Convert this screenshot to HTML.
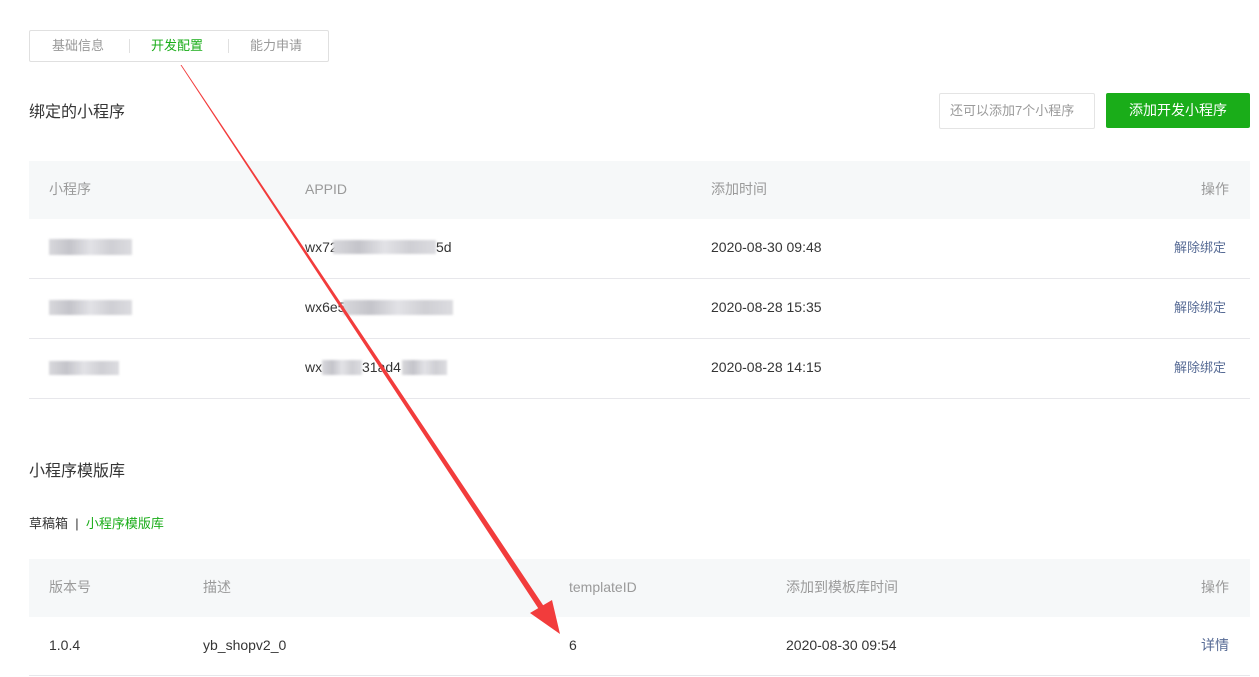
<!DOCTYPE html><html><head><meta charset="utf-8"><style>
body{margin:0;width:1259px;height:677px;background:#fff;font-family:"Liberation Sans","Noto Sans CJK SC",sans-serif;font-size:14px;color:#353535;position:relative;overflow:hidden}
.a{position:absolute;white-space:nowrap}
.g{color:#9a9a9a}
.bar{position:absolute;left:29px;width:1221px;background:#f6f8f9}
.line{position:absolute;left:29px;width:1221px;height:1px;background:#e7e7eb}
.blur{position:absolute;background:linear-gradient(90deg,#d8d8dc,#c4c4ca,#e2e2e6,#cfcfd4,#dcdce0);filter:blur(1px)}
.lk{color:#576b95}
</style></head><body>
<div class="a" style="left:29px;top:30px;width:298px;height:30px;border:1px solid #e0e0e0;border-radius:2px"></div>
<div class="a g" style="left:52px;top:35px;font-size:13px;color:#999">基础信息</div>
<div class="a" style="left:129px;top:39px;width:1px;height:14px;background:#e0e0e0"></div>
<div class="a" style="left:151px;top:35px;font-size:13px;color:#1aad19">开发配置</div>
<div class="a" style="left:228px;top:39px;width:1px;height:14px;background:#e0e0e0"></div>
<div class="a" style="left:250px;top:35px;font-size:13px;color:#999">能力申请</div>
<div class="a" style="left:29px;top:98px;font-size:16px">绑定的小程序</div>
<div class="a" style="left:939px;top:93px;width:154px;height:34px;border:1px solid #e4e4e4;border-radius:2px"></div>
<div class="a g" style="left:950px;top:100px;font-size:13px">还可以添加7个小程序</div>
<div class="a" style="left:1106px;top:93px;width:144px;height:35px;background:#1aad19;border-radius:2px;color:#fff;text-align:center;line-height:35px;font-size:14px">添加开发小程序</div>
<div class="bar" style="top:161px;height:58px"></div>
<div class="a g" style="left:49px;top:179px">小程序</div>
<div class="a g" style="left:305px;top:181px">APPID</div>
<div class="a g" style="left:711px;top:179px">添加时间</div>
<div class="a g" style="left:1201px;top:179px">操作</div>
<div class="blur" style="left:49px;top:239px;width:83px;height:16px"></div>
<div class="a" style="left:305px;top:239px">wx72</div><div class="blur" style="left:333px;top:240px;width:103px;height:14px"></div><div class="a" style="left:436px;top:239px">5d</div>
<div class="a" style="left:711px;top:239px">2020-08-30 09:48</div>
<div class="a lk" style="left:1174px;top:237px;font-size:13px">解除绑定</div>
<div class="line" style="top:278px"></div>
<div class="blur" style="left:49px;top:300px;width:83px;height:15px"></div>
<div class="a" style="left:305px;top:299px">wx6e5c3</div><div class="blur" style="left:343px;top:300px;width:110px;height:15px"></div>
<div class="a" style="left:711px;top:299px">2020-08-28 15:35</div>
<div class="a lk" style="left:1174px;top:297px;font-size:13px">解除绑定</div>
<div class="line" style="top:338px"></div>
<div class="blur" style="left:49px;top:361px;width:70px;height:14px"></div>
<div class="a" style="left:305px;top:359px">wx</div><div class="blur" style="left:322px;top:360px;width:40px;height:15px"></div><div class="a" style="left:362px;top:359px">31ad4</div><div class="blur" style="left:402px;top:360px;width:45px;height:15px"></div>
<div class="a" style="left:711px;top:359px">2020-08-28 14:15</div>
<div class="a lk" style="left:1174px;top:357px;font-size:13px">解除绑定</div>
<div class="line" style="top:398px"></div>
<div class="a" style="left:29px;top:457px;font-size:16px">小程序模版库</div>
<div class="a" style="left:29px;top:513px;font-size:13px">草稿箱 &nbsp;|&nbsp; <span style="color:#1aad19">小程序模版库</span></div>
<div class="bar" style="top:559px;height:58px"></div>
<div class="a g" style="left:49px;top:577px">版本号</div>
<div class="a g" style="left:203px;top:577px">描述</div>
<div class="a g" style="left:569px;top:579px">templateID</div>
<div class="a g" style="left:786px;top:577px">添加到模板库时间</div>
<div class="a g" style="left:1201px;top:577px">操作</div>
<div class="a" style="left:49px;top:637px">1.0.4</div>
<div class="a" style="left:203px;top:637px">yb_shopv2_0</div>
<div class="a" style="left:569px;top:637px">6</div>
<div class="a" style="left:786px;top:637px">2020-08-30 09:54</div>
<div class="a lk" style="left:1201px;top:635px">详情</div>
<div class="line" style="top:675px"></div>
<svg class="a" style="left:0;top:0" width="1259" height="677">
<polygon points="180.5,65 181.5,65 549,614 544,617" fill="#f23c3c"/>
<polygon points="530,613 560,634 552,600" fill="#f23c3c"/>
</svg>
</body></html>
